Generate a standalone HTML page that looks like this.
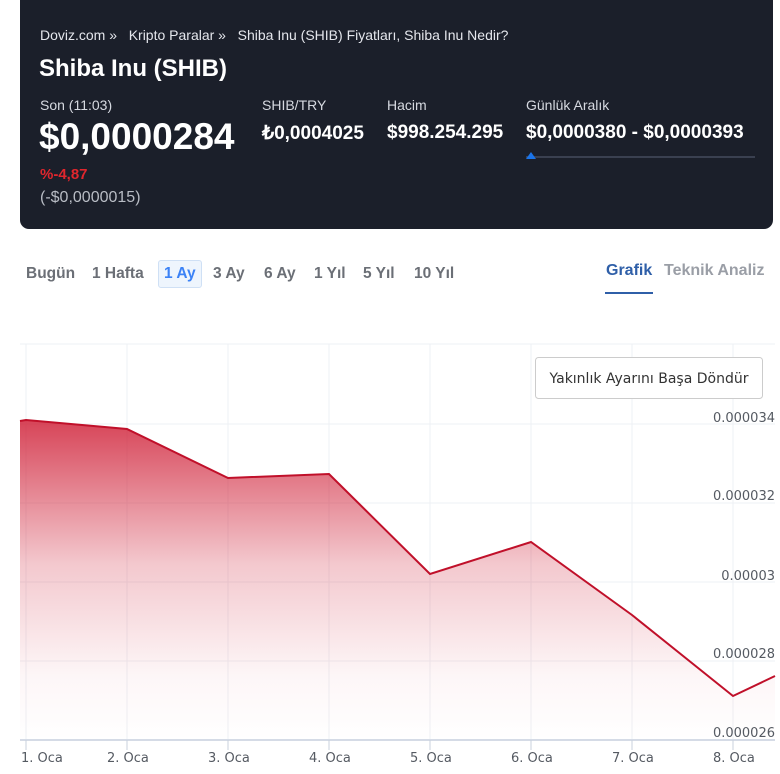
<!DOCTYPE html>
<html><head><meta charset="utf-8"><style>
body{margin:0;width:780px;height:774px;background:#fff;font-family:"Liberation Sans",Arial,sans-serif;position:relative;overflow:hidden}
.card{position:absolute;left:20px;top:0;width:753px;height:229px;background:#1b1f2a;border-radius:0 0 9px 9px;color:#fff}
.a{position:absolute;white-space:nowrap}
.bc{top:27px;left:20px;font-size:14px;color:#e4e6ec}
.h1{top:55px;left:19px;font-size:24px;font-weight:bold}
.lbl{font-size:14px;color:#d6d9e0;top:97px}
.val{font-size:19px;font-weight:bold;top:122px}
.tabs span{position:absolute;top:265px;font-size:15.5px;color:#6b6f76;font-weight:bold}
</style></head><body>
<div class="card">
<div class="a bc">Doviz.com »&nbsp;&nbsp; Kripto Paralar »&nbsp;&nbsp; Shiba Inu (SHIB) Fiyatları, Shiba Inu Nedir?</div>
<div class="a h1">Shiba Inu (SHIB)</div>
<div class="a lbl" style="left:20px">Son (11:03)</div>
<div class="a" style="left:19px;top:116px;font-size:37px;font-weight:bold">$0,0000284</div>
<div class="a" style="left:20px;top:166px;font-size:15px;font-weight:bold;color:#e0262d">%-4,87</div>
<div class="a" style="left:20px;top:189px;font-size:16px;color:#b8bcc4">(-$0,0000015)</div>
<div class="a lbl" style="left:242px">SHIB/TRY</div>
<div class="a val" style="left:242px">₺0,0004025</div>
<div class="a lbl" style="left:367px">Hacim</div>
<div class="a val" style="left:367px">$998.254.295</div>
<div class="a lbl" style="left:506px">Günlük Aralık</div>
<div class="a val" style="left:506px">$0,0000380 - $0,0000393</div>
<div class="a" style="left:506px;top:156px;width:229px;height:2px;background:#3a4050"></div>
<div class="a" style="left:506px;top:152px;width:0;height:0;border-left:5px solid transparent;border-right:5px solid transparent;border-bottom:7px solid #1a73e8"></div>
</div>
<div class="tabs">
<span style="left:26px">Bugün</span><span style="left:92px">1 Hafta</span>
<span style="left:158px;top:260px;padding:4px 5px;border:1px solid #cfe0f5;background:#eef5fd;border-radius:3px;color:#3b82f6">1 Ay</span>
<span style="left:213px">3 Ay</span><span style="left:264px">6 Ay</span><span style="left:314px">1 Yıl</span><span style="left:363px">5 Yıl</span><span style="left:414px">10 Yıl</span>
<span style="left:606px;top:262px;font-size:16px;color:#2f5fa8">Grafik</span><span style="left:664px;top:262px;font-size:16px;color:#9a9ea6">Teknik Analiz</span>
</div>
<div class="a" style="left:605px;top:292px;width:48px;height:2px;background:#2f5fa8"></div>
<svg class="a" style="left:0;top:0" width="780" height="774">
<defs><linearGradient id="g" gradientUnits="userSpaceOnUse" x1="0" y1="420" x2="0" y2="740"><stop offset="0" stop-color="#d0233a" stop-opacity=".85"/><stop offset="0.45" stop-color="#d0233a" stop-opacity=".25"/><stop offset="0.8" stop-color="#d0233a" stop-opacity=".04"/><stop offset="1" stop-color="#d0233a" stop-opacity="0"/></linearGradient></defs>
<g stroke="#eef0f4" stroke-width="1">
<line x1="20" y1="344" x2="775" y2="344"/><line x1="20" y1="424" x2="775" y2="424"/><line x1="20" y1="503" x2="775" y2="503"/><line x1="20" y1="582" x2="775" y2="582"/><line x1="20" y1="661" x2="775" y2="661"/>
<line x1="26" y1="344" x2="26" y2="740"/><line x1="127" y1="344" x2="127" y2="740"/><line x1="228" y1="344" x2="228" y2="740"/><line x1="329" y1="344" x2="329" y2="740"/><line x1="430" y1="344" x2="430" y2="740"/><line x1="531" y1="344" x2="531" y2="740"/><line x1="632" y1="344" x2="632" y2="740"/><line x1="733" y1="344" x2="733" y2="740"/>
</g>
<path d="M20,421 L26,420 L127,429 L228,478 L329,474 L430,574 L531,542 L632,615 L733,696 L775,676 L775,740 L20,740Z" fill="url(#g)"/>
<path d="M20,421 L26,420 L127,429 L228,478 L329,474 L430,574 L531,542 L632,615 L733,696 L775,676" fill="none" stroke="#c0102a" stroke-width="2"/>
<line x1="20" y1="740" x2="775" y2="740" stroke="#d5dbe6" stroke-width="2"/>
<g stroke="#c8d0de"><line x1="26" y1="740" x2="26" y2="750"/><line x1="127" y1="740" x2="127" y2="750"/><line x1="228" y1="740" x2="228" y2="750"/><line x1="329" y1="740" x2="329" y2="750"/><line x1="430" y1="740" x2="430" y2="750"/><line x1="531" y1="740" x2="531" y2="750"/><line x1="632" y1="740" x2="632" y2="750"/><line x1="733" y1="740" x2="733" y2="750"/></g>
<g font-family="DejaVu Sans,sans-serif" font-size="13" fill="#555a62">
<g text-anchor="end"><text x="775" y="422">0.000034</text><text x="775" y="500">0.000032</text><text x="775" y="580">0.00003</text><text x="775" y="658">0.000028</text><text x="775" y="737">0.000026</text></g>
<text x="21" y="762">1. Oca</text><text x="107" y="762">2. Oca</text><text x="208" y="762">3. Oca</text><text x="309" y="762">4. Oca</text><text x="410" y="762">5. Oca</text><text x="511" y="762">6. Oca</text><text x="612" y="762">7. Oca</text><text x="713" y="762">8. Oca</text>
</g>
<rect x="535.5" y="357.5" width="227" height="41" rx="3" fill="#fff" stroke="#ccc"/>
<text x="649" y="383" text-anchor="middle" font-family="DejaVu Sans,sans-serif" font-size="14" fill="#333">Yakınlık Ayarını Başa Döndür</text>
</svg>
</body></html>
